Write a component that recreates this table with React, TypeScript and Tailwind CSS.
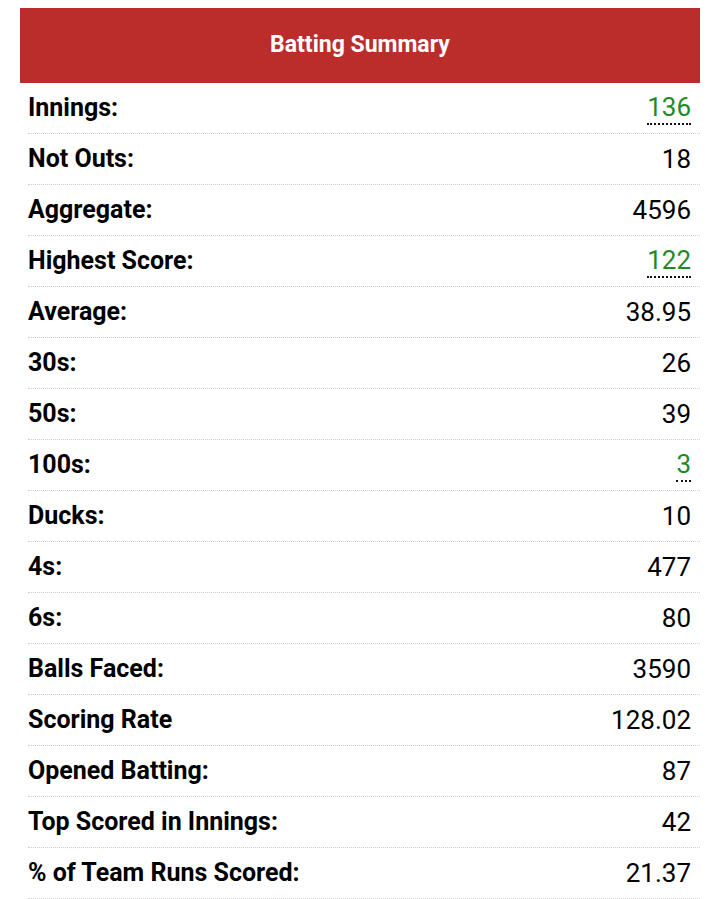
const rows: { label: string; value: string; link?: boolean }[] = [
  { label: "Innings:", value: "136", link: true },
  { label: "Not Outs:", value: "18" },
  { label: "Aggregate:", value: "4596" },
  { label: "Highest Score:", value: "122", link: true },
  { label: "Average:", value: "38.95" },
  { label: "30s:", value: "26" },
  { label: "50s:", value: "39" },
  { label: "100s:", value: "3", link: true },
  { label: "Ducks:", value: "10" },
  { label: "4s:", value: "477" },
  { label: "6s:", value: "80" },
  { label: "Balls Faced:", value: "3590" },
  { label: "Scoring Rate", value: "128.02" },
  { label: "Opened Batting:", value: "87" },
  { label: "Top Scored in Innings:", value: "42" },
  { label: "% of Team Runs Scored:", value: "21.37" },
];

const App = () => {
  return (
    <main className="bg-white min-h-screen pt-2 font-['Roboto',sans-serif]">
      <div className="mx-5">
        <div className="h-[75px] bg-[#bb2d2b] flex items-center justify-center">
          <h2 className="text-white font-bold text-[23px]">Batting Summary</h2>
        </div>
        <div className="pl-2">
          {rows.map((row) => (
            <div
              key={row.label}
              className="h-[51px] flex items-center justify-between pr-[9px] border-b border-dotted border-[#cfcfcf] text-black"
            >
              <span className="font-bold text-[25px]">{row.label}</span>
              {row.link ? (
                <span className="text-[26px] text-[#1f8a1f] leading-[1.25] border-b-2 border-dotted border-[#111]">
                  {row.value}
                </span>
              ) : (
                <span className="text-[26px]">{row.value}</span>
              )}
            </div>
          ))}
        </div>
      </div>
    </main>
  );
};

export default App;
